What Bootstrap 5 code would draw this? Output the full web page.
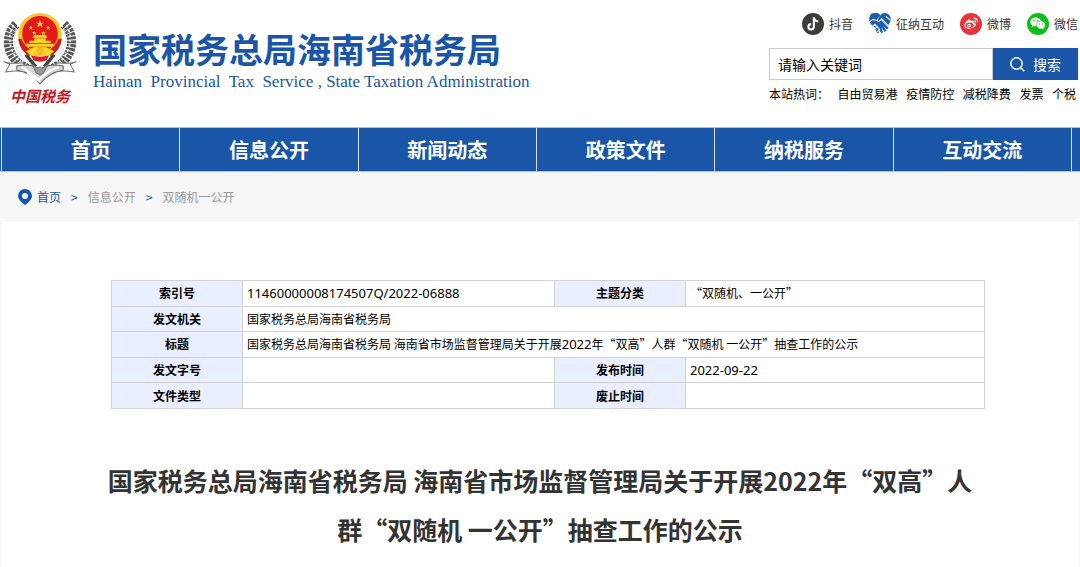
<!DOCTYPE html>
<html lang="zh-CN">
<head>
<meta charset="utf-8">
<meta name="viewport" content="width=device-width, initial-scale=1">
<title>国家税务总局海南省税务局</title>
<link href="https://cdn.jsdelivr.net/npm/bootstrap@5.3.0/dist/css/bootstrap.min.css" rel="stylesheet">
<style>
  :root { --tax-blue: #1a56a8; }
  body { font-family: "Noto Sans CJK SC", sans-serif; font-size: 12px; line-height: 18px; color: #000; background: #fff; }
  a { color: inherit; text-decoration: none; }
  .latin { font-family: "Noto Sans", sans-serif; }
  .site-header { min-height: 127px; padding: 13px 2px 0 3px; }
  .emblem-box { width: 74px; }
  .emblem-box svg { display: block; width: 74px; height: 72px; }
  .emblem-text { font-family: "Liberation Serif", "Noto Sans CJK SC", serif; font-size: 15px; line-height: 24px; font-weight: 700; font-style: italic; color: #c8161d; text-align: center; }
  .site-name { font-size: 34px; line-height: 44px; font-weight: 700; color: var(--tax-blue); margin: 14px 0 0; }
  .site-sub { font-family: "Liberation Serif", serif; font-size: 17px; line-height: 22px; color: var(--tax-blue); white-space: pre; }
  .tools { width: 309px; }
  .social { gap: 16px; color: #333; height: 22px; }
  .social a { display: flex; align-items: center; gap: 5px; }
  .social svg { width: 22px; height: 22px; }
  .search-row { height: 32px; margin-top: 13px; }
  .search-row .form-control { border: 1px solid #ccc; border-radius: 0; font-size: 14px; padding: 0 8px; color: #000; }
  .search-row .form-control::placeholder { color: #000; opacity: 1; }
  .search-row .btn { width: 85px; flex: none; background: var(--tax-blue); color: #fff; border: 0; border-radius: 0; font-size: 14px; padding: 0; }
  .hot { gap: 8px; margin-top: 5px; padding-right: 2px; white-space: nowrap; }
  .main-nav { display: grid; grid-template-columns: repeat(6, 1fr) 9px; padding-left: 1px; background: var(--tax-blue); border: solid #a9c1e0; border-width: 1px 0; height: 45px; }
  .main-nav a, .main-nav span { border-left: 1px solid #d5e0f0; color: #fff; font-size: 20px; font-weight: 700; line-height: 43px; text-align: center; }
  .crumbs { background: #f6f6f6; height: 50px; padding-left: 18px; gap: 10px; color: #999; }
  .crumbs .blue { color: var(--tax-blue); }
  .crumbs .home { display: flex; align-items: center; gap: 5px; }
  .article { border: solid #f3f3f3; border-width: 0 1px; padding: 58px 102px 12px; }
  .info { width: 100%; height: 129px; table-layout: fixed; border-collapse: collapse; margin: 0; }
  .info-box { margin: 0 -8px 0 8px; }
  .info th, .info td { border: 1px solid #d3d3d3; padding: 0 4px; line-height: 18px; }
  .info th { background: #e9effe; text-align: center; font-weight: 700; }
  .info .latin { font-size: 13px; }
  .c-label { width: 131px; } .c-mid { width: 312px; }
  .headline { font-size: 25px; line-height: 49px; font-weight: 700; color: #333; text-align: center; margin: 47px 0 0; }
</style>
</head>
<body>
<header class="site-header d-flex justify-content-between align-items-start">
  <a href="#" class="d-flex gap-3">
    <div class="emblem-box">
      <svg viewBox="10 28 220 216" preserveAspectRatio="none" aria-hidden="true">
        <g fill="none" stroke="#555">
          <path d="M49 62C17 92 17 143 58 181L101 203" stroke-width="27" stroke-dasharray="8 3"/>
          <path d="M191 62C223 92 223 143 182 181L139 203" stroke-width="27" stroke-dasharray="8 3"/>
          <path d="M42 65C20 97 27 150 70 181M198 65C220 97 213 150 170 181" stroke="#f2f2f2" stroke-width="5" stroke-dasharray="8 7"/>
          <path d="M55 65C36 100 39 143 82 174M185 65C204 100 201 143 158 174" stroke="#ddd" stroke-width="4" stroke-dasharray="6 6"/>
        </g>
        <path d="M78 153L107 189M162 153L133 189" stroke="#444" stroke-width="10"/>
        <circle cx="120" cy="93" r="65" fill="#f6c62b"/>
        <circle cx="120" cy="90" r="53" fill="#e5191b"/>
        <path d="M55 105Q58 137 88 158L97 141Q73 128 65 105ZM185 105Q182 137 152 158L143 141Q167 128 175 105Z" fill="#d7191c"/>
        <g fill="#ffd429">
          <path d="M120 49l3 8h9l-7 5 3 9-8-5-8 5 3-9-7-5h9Z"/>
          <path id="smallStar" d="M93 66l2 4h5l-4 3 2 5-5-3-4 3 1-5-4-3h5Z"/>
          <use href="#smallStar" x="51"/><use href="#smallStar" x="10" y="16"/><use href="#smallStar" x="37" y="16"/>
          <path d="M102 94h36l4 8H98ZM103 104h34v7h15v7H88v-7h15ZM78 120h84l-5 9H83Z"/>
          <path d="M90 137q14-12 30-5 16-7 30 5l12 5-13 13q-13-1-20-8h-18q-7 7-20 8l-13-13Z"/>
        </g>
        <circle cx="120" cy="142" r="11" fill="#f4ba27"/>
        <path d="M93 155q27 8 54 0l-7 15q-20 8-40 0Z" fill="#df2020"/>
        <path d="M12 174l18 8-12 23q24-4 45-2l20-14-17-12q-27 5-54-3ZM228 174l-18 8 12 23q-24-4-45-2l-20-14 17-12q27 5 54-3Z" fill="#f6f6f6" stroke="#777" stroke-width="3"/>
        <path d="M51 187q40-9 69 10 29-19 69-10v12q-44 9-69 42-25-33-69-42Z" fill="#d4d4d4" stroke="#666" stroke-width="3"/>
        <path d="M66 190l52 37q29-29 58-36M82 208l37 26" fill="none" stroke="#fff" stroke-width="6"/>
        <path d="M96 180l17 14 7-5 7 5 17-14-12 27-12 8-12-8Z" fill="#999" stroke="#555" stroke-width="2"/>
      </svg>
      <div class="emblem-text">中国税务</div>
    </div>
    <div>
      <h1 class="site-name">国家税务总局海南省税务局</h1>
      <div class="site-sub">Hainan  Provincial  Tax  Service , State Taxation Administration</div>
    </div>
  </a>
  <div class="tools">
    <div class="social d-flex justify-content-end">
      <a href="#"><svg viewBox="0 0 21 21"><circle cx="10.500" cy="10.500" r="10.500" fill="#3c3c3c"/><path d="M11.300 4v9.200a2.600 2.600 0 1 1-2.600-2.600M11.300 4.500q.8 3.200 4.200 3.600" fill="none" stroke="#fff" stroke-width="2"/></svg>抖音</a>
      <a href="#"><svg viewBox="0 0 64 64"><path d="M3 8Q6 0 16 0h10l8 7-9 9q-5 8 1 9 4 1 9-5l22 23-4 5-12-11 10 14-5 4-11-13 6 14-5 3-9-13 2 13-6-2-6-14L5 32Q-3 18 3 8Z" fill="#1f5daf"/><path d="M35 4Q43-3 54 2q15 9 6 27l-6 9-18-19-9 4q-3 0-1-5Z" fill="#1f5daf"/><path d="M2 25l9-6 15 3M10 40l7-7 8 8M16 47l8-7 7 8M24 54l7-7M28 24q6-1 9-7l21 22M49 10l13 11" fill="none" stroke="#fff" stroke-width="3"/></svg>征纳互动</a>
      <a href="#"><svg viewBox="0 0 21 21"><circle cx="10.500" cy="10.500" r="10.500" fill="#e6343b"/><path d="M8 6.500c2-.9 2.500.2 2.100 1.400 2.500-1 4.100-.2 3.400 1.500 1.700.5 2 1.800 1.100 3.100-1.700 2.800-10 3.700-10.400-.1C4 10.500 6 7.500 8 6.500Z" fill="#fff"/><ellipse cx="9.200" cy="11.700" rx="3.800" ry="2.600" fill="#e6343b"/><circle cx="8.700" cy="12" r="1.800" fill="#fff"/><circle cx="8.300" cy="12.200" r=".8" fill="#e6343b"/><path d="M13 5.200q3.800-.4 3.800 3.600M13.200 7.200q1.700-.1 1.700 1.700" stroke="#fff" stroke-width="1.100" fill="none"/></svg>微博</a>
      <a href="#"><svg viewBox="0 0 21 21"><circle cx="10.500" cy="10.500" r="10.500" fill="#0abf16"/><path d="M8.300 4.300c-3 0-5 1.800-5 4.200 0 1.400.7 2.500 1.800 3.200l-.5 1.700 2-.9q1 .3 2.300.2c-1-3.400 1.600-5.400 4.400-5.400-.6-1.900-2.700-3-5-3Z" fill="#fff"/><path d="M13.400 7.900c-2.500 0-4.300 1.600-4.300 3.500 0 2.300 2.500 4 5.300 3.400l1.700.9-.4-1.500c1.100-.7 1.800-1.700 1.800-2.800 0-1.900-1.800-3.500-4.100-3.500Z" fill="#fff"/><g fill="#0abf16"><circle cx="6.700" cy="7.400" r=".7"/><circle cx="10" cy="7.400" r=".7"/><circle cx="12" cy="10.500" r=".6"/><circle cx="15" cy="10.500" r=".6"/></g></svg>微信</a>
    </div>
    <form class="search-row d-flex">
      <input class="form-control" type="text" placeholder="请输入关键词" aria-label="请输入关键词">
      <button class="btn d-flex align-items-center justify-content-center gap-2" type="button"><svg width="15" height="15" viewBox="0 0 15 15" fill="none" stroke="#fff" stroke-width="1.500"><circle cx="6.500" cy="6.500" r="5.700"/><path d="M10.800 10.800l3.400 3.400"/></svg>搜索</button>
    </form>
    <div class="hot d-flex justify-content-between"><span>本站热词：</span><a href="#">自由贸易港</a><a href="#">疫情防控</a><a href="#">减税降费</a><a href="#">发票</a><a href="#">个税</a></div>
  </div>
</header>
<nav class="main-nav">
  <a href="#">首页</a><a href="#">信息公开</a><a href="#">新闻动态</a><a href="#">政策文件</a><a href="#">纳税服务</a><a href="#">互动交流</a><span></span>
</nav>
<div class="crumbs d-flex align-items-center">
  <a href="#" class="blue home"><svg width="14" height="16" viewBox="0 0 14 16" aria-hidden="true"><path fill="#0e58ae" fill-rule="evenodd" d="M7 0a7 7 0 0 0-7 7q0 4 7 9 7-5 7-9A7 7 0 0 0 7 0ZM7 4a3 3 0 1 1 0 6 3 3 0 0 1 0-6Z"/></svg>首页</a><span class="blue">&gt;</span><a href="#">信息公开</a><span class="blue">&gt;</span><a href="#">双随机一公开</a>
</div>
<main class="article">
  <div class="info-box">
    <table class="info">
      <colgroup><col class="c-label"><col class="c-mid"><col class="c-label"><col></colgroup>
      <tr><th>索引号</th><td class="latin">11460000008174507Q/2022-06888</td><th>主题分类</th><td>“双随机、一公开”</td></tr>
      <tr><th>发文机关</th><td colspan="3">国家税务总局海南省税务局</td></tr>
      <tr><th>标题</th><td colspan="3">国家税务总局海南省税务局 海南省市场监督管理局关于开展<span class="latin">2022</span>年“双高”人群“双随机 一公开”抽查工作的公示</td></tr>
      <tr><th>发文字号</th><td></td><th>发布时间</th><td class="latin">2022-09-22</td></tr>
      <tr><th>文件类型</th><td></td><th>废止时间</th><td></td></tr>
    </table>
  </div>
  <h2 class="headline">国家税务总局海南省税务局 海南省市场监督管理局关于开展2022年“双高”人群“双随机 一公开”抽查工作的公示</h2>
</main>
<script src="https://cdn.jsdelivr.net/npm/bootstrap@5.3.0/dist/js/bootstrap.bundle.min.js"></script>
</body>
</html>
